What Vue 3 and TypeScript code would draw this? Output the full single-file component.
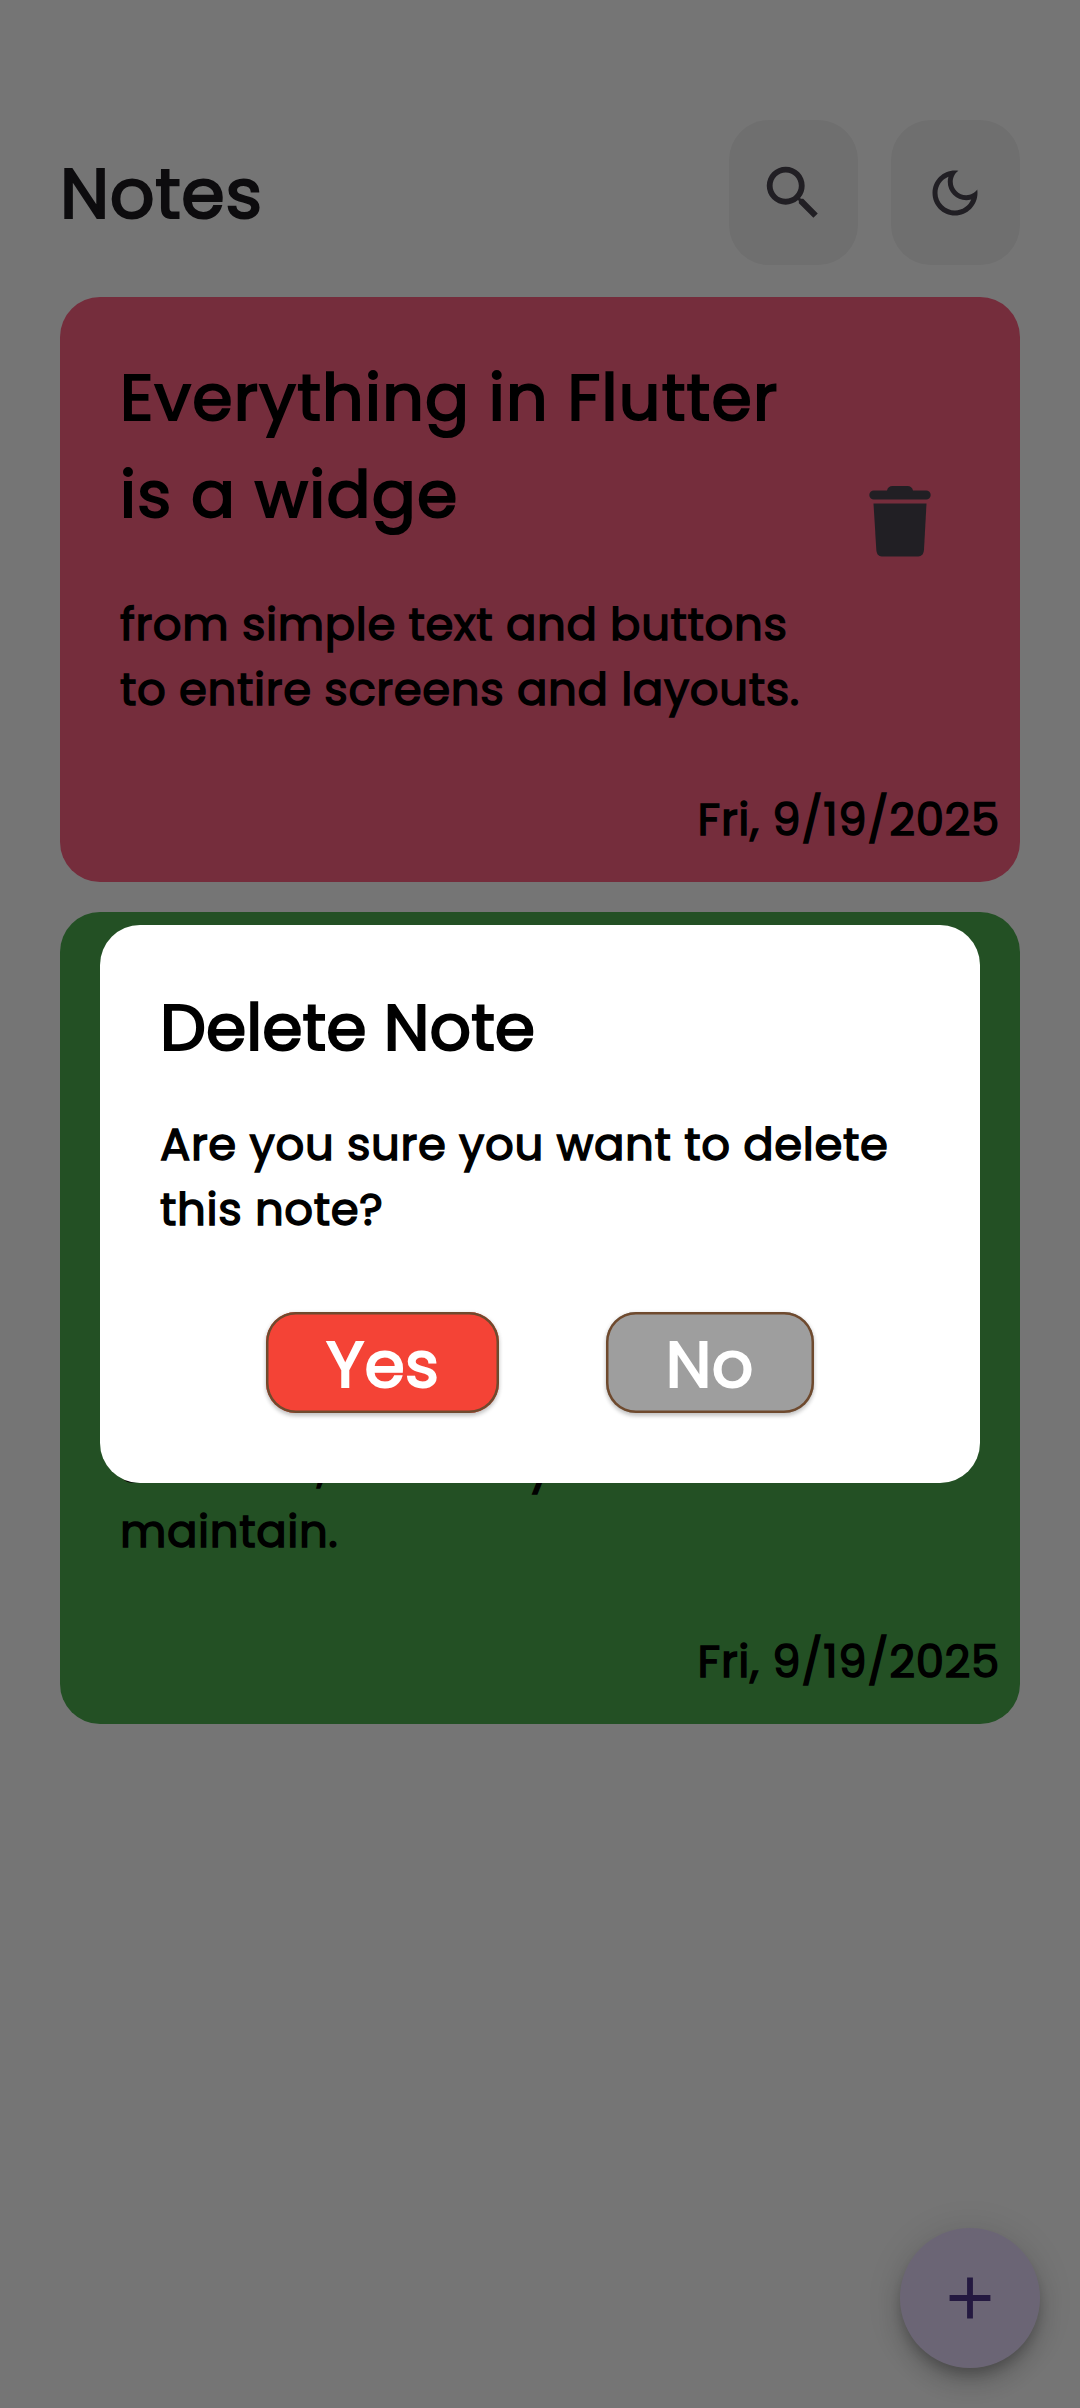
<script setup lang="ts">
interface Note {
  id: number
  tone: string
  title: string[]
  body: string[]
  date: string
}

const notes: Note[] = [
  {
    id: 1,
    tone: 'pink',
    title: ['Everything in Flutter', 'is a widge'],
    body: ['from simple text and buttons', 'to entire screens and layouts.'],
    date: 'Fri, 9/19/2025',
  },
  {
    id: 2,
    tone: 'green',
    title: [],
    body: ['scalable, and easy to', 'maintain.'],
    date: 'Fri, 9/19/2025',
  },
]

const question: string[] = ['Are you sure you want to delete', 'this note?']
</script>

<template>
  <div class="screen">
    <header class="top">
      <h1>Notes</h1>
      <div class="actions">
        <button class="tool" aria-label="Search">
          <svg width="70" height="70" viewBox="0 0 24 24">
            <path d="M15.5 14h-.79l-.28-.27A6.471 6.471 0 0 0 16 9.5 6.5 6.5 0 1 0 9.5 16c1.61 0 3.09-.59 4.23-1.57l.27.28v.79l5 4.99L20.49 19l-4.99-5zm-6 0C7.01 14 5 11.99 5 9.5S7.01 5 9.5 5 14 7.01 14 9.5 11.99 14 9.5 14z" />
          </svg>
        </button>
        <button class="tool" aria-label="Dark mode">
          <svg width="60" height="60" viewBox="0 0 24 24">
            <path d="M9.37 5.51C9.19 6.15 9.1 6.82 9.1 7.5c0 4.08 3.32 7.4 7.4 7.4.68 0 1.35-.09 1.99-.27C17.45 17.19 14.93 19 12 19c-3.86 0-7-3.14-7-7 0-2.93 1.81-5.45 4.37-6.49zM12 3c-4.97 0-9 4.03-9 9s4.03 9 9 9 9-4.03 9-9c0-.46-.04-.92-.1-1.36-.98 1.37-2.58 2.26-4.4 2.26-2.98 0-5.4-2.42-5.4-5.4 0-1.81.89-3.42 2.26-4.4C12.92 3.04 12.46 3 12 3z" />
          </svg>
        </button>
      </div>
    </header>

    <main class="list">
      <article v-for="note in notes" :key="note.id" class="card" :class="note.tone">
        <div class="content">
          <div class="words">
            <h2 v-if="note.title.length">
              <span v-for="l in note.title" :key="l" class="line">{{ l }}</span>
            </h2>
            <p>
              <span v-for="l in note.body" :key="l" class="line">{{ l }}</span>
            </p>
          </div>
          <svg v-if="note.title.length" class="trash" width="62" height="71" viewBox="0 0 62 71">
            <path d="M4.8 4.5H18C18.6 1.6 20.6 0 23.4 0H38.6C41.4 0 43.4 1.6 44 4.5H57.2A4.5 4.5 0 0 1 57.2 13.5H4.8A4.5 4.5 0 0 1 4.8 4.5Z" />
            <path d="M4.5 17.6H57.5L55 63.8C54.7 68 52.7 70.4 49.2 70.4H12.8C9.3 70.4 7.6 68 7.3 63.8Z" />
          </svg>
        </div>
        <div class="date">{{ note.date }}</div>
      </article>
    </main>

    <button class="fab" aria-label="Add note">
      <svg width="70" height="70" viewBox="0 0 24 24"><path d="M19 13h-6v6h-2v-6H5v-2h6V5h2v6h6v2z" /></svg>
    </button>

    <div class="scrim">
      <section class="dialog" role="dialog">
        <h2>Delete Note</h2>
        <p>
          <span v-for="l in question" :key="l" class="line">{{ l }}</span>
        </p>
        <div class="choices">
          <button class="choice yes">Yes</button>
          <button class="choice no">No</button>
        </div>
      </section>
    </div>
  </div>
</template>

<style>
body {
  margin: 0;
  background: #fff;
}
</style>

<style scoped>
.screen {
  position: relative;
  box-sizing: border-box;
  width: 1080px;
  height: 2408px;
  overflow: hidden;
  padding: 119.7px 60px 0;
  background: #fff;
  color: #000;
  font-family: Poppins, Inter, 'Open Sans', sans-serif;
  font-feature-settings: 'cv11' 1;
  font-weight: 400;
}

button {
  border: 0;
  padding: 0;
  font: inherit;
  font-feature-settings: inherit;
}

h1,
h2,
p {
  margin: 0;
  font-weight: inherit;
}

.line {
  display: block;
  width: max-content;
  white-space: pre;
}

.top {
  display: flex;
  align-items: center;
  justify-content: space-between;
  height: 145px;
}

h1 {
  padding-top: 4px;
  color: #1d1b20;
  font-size: 70px;
  line-height: 104px;
  letter-spacing: 0.625px;
  -webkit-text-stroke: 2.19px currentColor;
}

.actions {
  display: flex;
  gap: 32.5px;
}

.tool {
  display: flex;
  align-items: center;
  justify-content: center;
  box-sizing: border-box;
  width: 129.5px;
  height: 145px;
  border-radius: 40px;
  padding-top: 1.4px;
  background: #f2f2f2;
}

.tool svg,
.trash {
  fill: #49454f;
}

.list {
  display: flex;
  flex-direction: column;
  gap: 30px;
  margin-top: 32.3px;
}

.card {
  display: flex;
  flex-direction: column;
  justify-content: flex-end;
  box-sizing: border-box;
  border-radius: 40px;
  padding: 0 20px 30px 60px;
}

.pink {
  height: 585px;
  background: #ff6284;
}

.green {
  height: 812.4px;
  background: #4caf50;
}

.content {
  display: flex;
  align-items: center;
  justify-content: space-between;
  padding-right: 69px;
}

h2 {
  font-size: 65px;
  line-height: 97px;
  -webkit-text-stroke: 2.03px currentColor;
}

.card h2 {
  margin-bottom: 49px;
  letter-spacing: 1.25px;
}

p,
.date {
  font-size: 45px;
  line-height: 65px;
  letter-spacing: 0.625px;
  -webkit-text-stroke: 1.41px currentColor;
}

.trash {
  position: relative;
  top: -14px;
}

.date {
  margin-top: 65px;
  text-align: right;
}

.fab {
  position: absolute;
  left: 900px;
  top: 2227.7px;
  display: flex;
  align-items: center;
  justify-content: center;
  width: 140px;
  height: 140px;
  border-radius: 50%;
  background: #eaddff;
  box-shadow:
    0 8px 12px -2px rgba(0, 0, 0, 0.2),
    0 15px 25px rgba(0, 0, 0, 0.14),
    0 3px 45px rgba(0, 0, 0, 0.12);
}

.fab svg {
  fill: #4f378b;
}

.scrim {
  position: absolute;
  inset: 0;
  display: flex;
  align-items: flex-start;
  justify-content: center;
  background: rgba(0, 0, 0, 0.54);
}

.dialog {
  box-sizing: border-box;
  width: 880px;
  height: 557.8px;
  margin-top: 924.8px;
  border-radius: 40px;
  padding: 54.2px 60px 0;
  background: #fff;
}

.dialog h2 {
  margin-bottom: 36px;
}

.choices {
  display: flex;
  justify-content: space-evenly;
  margin-top: 70.5px;
}

.choice {
  display: flex;
  align-items: center;
  justify-content: center;
  box-sizing: border-box;
  height: 100.2px;
  border-radius: 30px;
  padding-top: 4.6px;
  color: #fff;
  font-size: 65px;
  letter-spacing: 0.25px;
  line-height: 80px;
  -webkit-text-stroke: 2.03px currentColor;
  box-shadow:
    inset 0 0 0 2.5px #6f4a2e,
    0 2.5px 4px rgba(0, 0, 0, 0.2),
    0 1px 5px rgba(0, 0, 0, 0.08);
}

.yes {
  width: 233px;
  background: #f44336;
}

.no {
  width: 208px;
  background: #9e9e9e;
}
</style>
